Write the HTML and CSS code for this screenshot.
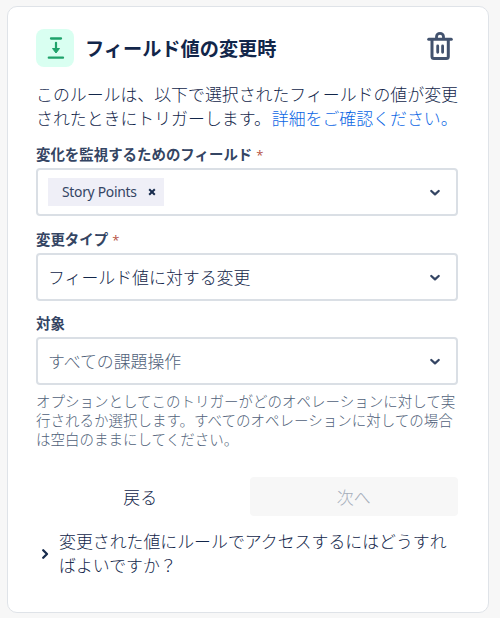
FILE: index.html
```html
<!DOCTYPE html>
<html lang="ja">
<head>
<meta charset="utf-8">
<title>フィールド値の変更時</title>
<link rel="stylesheet" href="styles.css">
</head>
<body>
<main class="card">
  <header class="head">
    <svg class="badge" viewBox="0 0 38 38"><rect width="38" height="38" rx="8" fill="#d9fff1"/><path d="M15 9.5H25M12.8 28.7H27" stroke="#1fa26b" stroke-width="2.3" stroke-linecap="round"/><path d="M20 13.8V20" stroke="#1fa26b" stroke-width="2.2" stroke-linecap="round"/><path d="M16.5 19.5H23.5L20 24Z" fill="#1fa26b" stroke="#1fa26b" stroke-linejoin="round"/></svg>
    <h1>フィールド値の変更時</h1>
    <svg class="trash" viewBox="0 0 28 32" fill="none" stroke="#42526e" stroke-width="3" stroke-linecap="round" stroke-linejoin="round"><path d="M2.7 9.3H25.3"/><path d="M10.5 8V6.8A3.5 3.5 0 0 1 17.5 6.8V8" stroke-width="2.8"/><path d="M6 10V26.5Q6 28.5 8 28.5H20.3Q22.3 28.5 22.3 26.5V10" stroke-width="3"/><path d="M11.7 16V22.3M16.6 16V22.3" stroke-width="2.8"/></svg>
  </header>
  <p class="intro">このルールは、以下で選択されたフィールドの値が変更<br>されたときにトリガーします。<a>詳細をご確認ください。</a></p>
  <div class="label">変化を監視するためのフィールド<span class="req">*</span></div>
  <div class="select">
    <span class="tag">Story Points<svg class="x" viewBox="0 0 8 8"><path d="M1.2 1.2L6.8 6.8M6.8 1.2L1.2 6.8"/></svg></span>
    <svg class="chev" viewBox="0 0 12 8"><path d="M2.3 2L6 5.3L9.7 2"/></svg>
  </div>
  <div class="label">変更タイプ<span class="req">*</span></div>
  <div class="select">
    <span>フィールド値に対する変更</span>
    <svg class="chev" viewBox="0 0 12 8"><path d="M2.3 2L6 5.3L9.7 2"/></svg>
  </div>
  <div class="label">対象</div>
  <div class="select">
    <span class="placeholder">すべての課題操作</span>
    <svg class="chev" viewBox="0 0 12 8"><path d="M2.3 2L6 5.3L9.7 2"/></svg>
  </div>
  <p class="help">オプションとしてこのトリガーがどのオペレーションに対して実<br>行されるか選択します。すべてのオペレーションに対しての場合<br>は空白のままにしてください。</p>
  <div class="actions">
    <div class="btn">戻る</div>
    <div class="btn disabled">次へ</div>
  </div>
  <div class="more">
    <svg class="arrow" viewBox="0 0 8 12"><path d="M2.2 2.2L6 6L2.2 9.8"/></svg>
    <span>変更された値にルールでアクセスするにはどうすれ<br>ばよいですか？</span>
  </div>
</main>
</body>
</html>
```
FILE: styles.css
```css
* { box-sizing: border-box; }
body {
  margin: 0;
  height: 618px;
  padding: 6px 11px 5px 7px;
  background: #f7f7f7;
  color: #12264a;
  font: 300 16.9px/24px "Noto Sans CJK JP", sans-serif;
  white-space: nowrap;
  overflow: hidden;
}
.card {
  height: 607px;
  padding: 21px 30px 0 28px;
  background: #fff;
  border: 1px solid #dfe3e8;
  border-radius: 10px;
}
.head { display: flex; align-items: center; height: 39px; }
.badge { width: 38px; height: 38px; }
h1 { margin: 0 0 0 11px; font-size: 19.2px; line-height: 28px; font-weight: 700; }
.trash { width: 28px; height: 32px; margin: 0 4px 3px auto; }
.intro { margin: 15px 0 0; }
.intro a { color: #0c66e4; margin-left: 1px; }
.label {
  height: 20px;
  margin: 14px 0 4px;
  color: #344563;
  font-size: 14.45px;
  line-height: 20px;
  font-weight: 700;
}
.select + .label { margin-top: 13px; }
.req { margin-left: 4px; color: #b55345; font: 13px/18px "Open Sans", sans-serif; }
.select {
  display: flex;
  align-items: center;
  justify-content: space-between;
  height: 48px;
  padding: 0 15px 0 10px;
  border: 2px solid #dadfe5;
  border-radius: 4px;
}
.select + .label + .select { margin-top: 4px; height: 48px; }
.select + .label + .select + .label { margin-top: 12px; }
.tag {
  display: flex;
  align-items: center;
  width: 116px;
  height: 28px;
  padding: 0 8px 0 14px;
  background: #efeff7;
  color: #344563;
  font: 13.9px/28px "Noto Sans", sans-serif;
  letter-spacing: -.3px;
}
.x { width: 8px; height: 8px; margin-left: auto; fill: none; stroke: #172b4d; stroke-width: 2; }
.chev { position: relative; top: 1px; width: 12px; height: 8px; fill: none; stroke: #344563; stroke-width: 2.3; stroke-linecap: round; stroke-linejoin: round; }
.placeholder { color: #505f79; }
.help { margin: 6px 0 0; color: #505f79; font-size: 14.5px; line-height: 19.2px; }
.actions { display: flex; gap: 5px; margin: 28px 0 0; }
.btn { flex: 1; height: 39px; line-height: 39px; text-align: center; border-radius: 4px; }
.disabled { background: #f7f7f7; color: #a5adba; }
.more { display: flex; align-items: center; margin-top: 13px; }
.arrow { position: relative; top: 1px; width: 8px; height: 12px; margin: 0 10px 0 5px; fill: none; stroke: #172b4d; stroke-width: 2.3; stroke-linecap: round; stroke-linejoin: round; }
```
